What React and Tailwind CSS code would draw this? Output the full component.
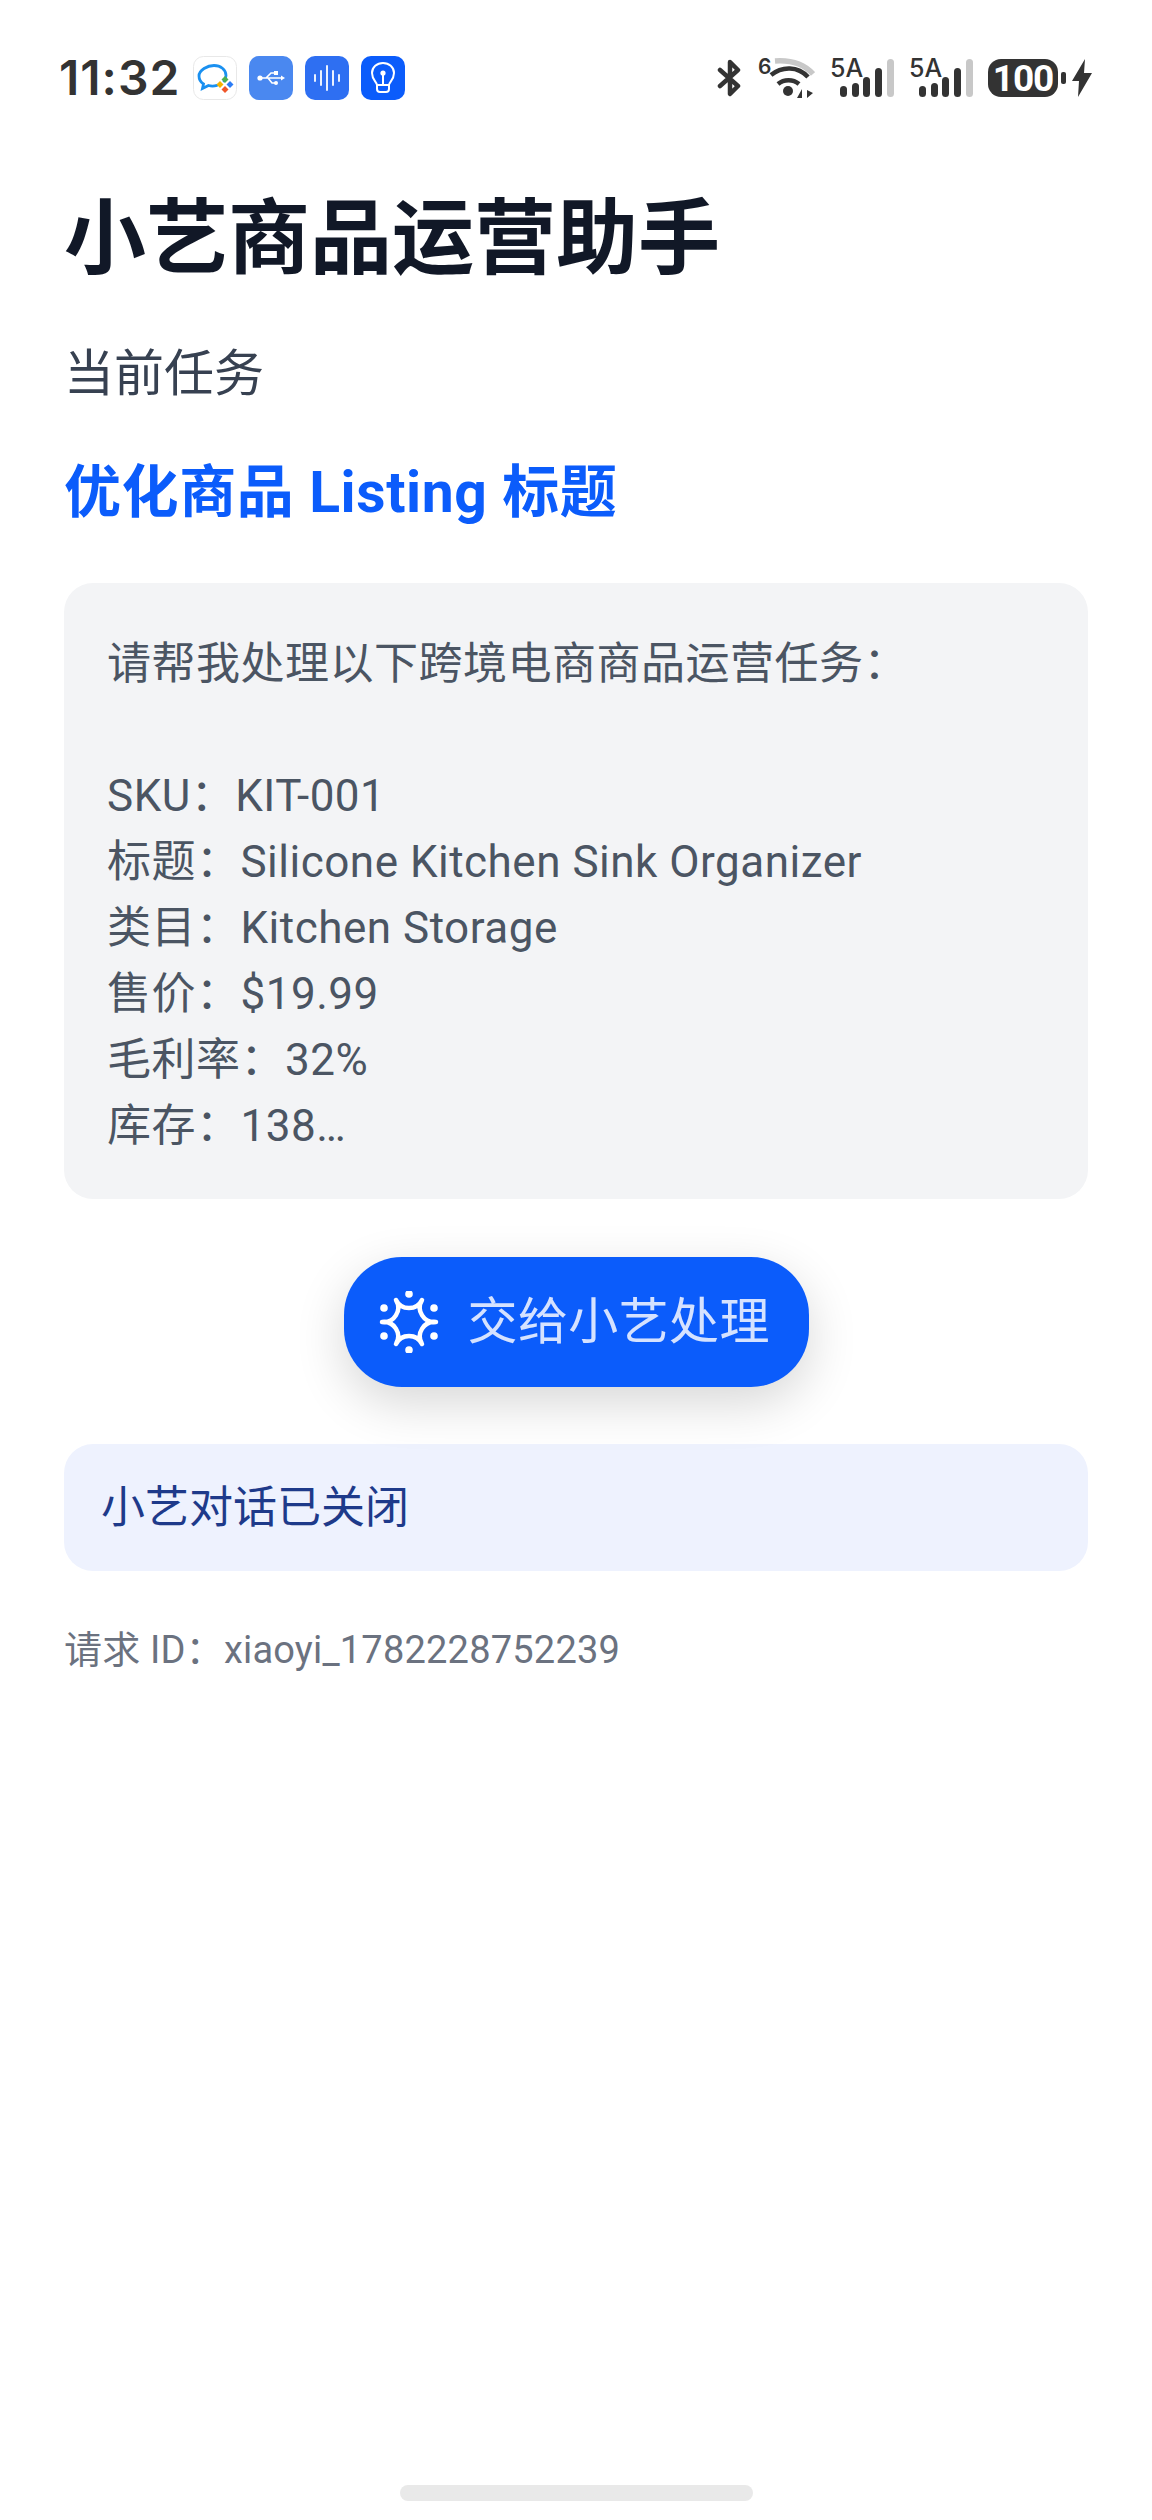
import React from 'react';

const FONT = "font-['Roboto','Noto_Sans_CJK_SC',sans-serif]";

const taskLines = [
  '请帮我处理以下跨境电商商品运营任务：',
  '',
  'SKU：KIT-001',
  '标题：Silicone Kitchen Sink Organizer',
  '类目：Kitchen Storage',
  '售价：$19.99',
  '毛利率：32%',
  '库存：138…',
];

// ── Status bar app icons ──
function ChatIcon() {
  return (
    <svg width="44" height="44" viewBox="0 0 44 44" fill="none">
      <rect x="0.5" y="0.5" width="43" height="43" rx="10" fill="#fff" stroke="#e8e8e8" />
      <path d="M31 25c1.500-1.500 2-3.500 2-5.500 0-6-5.500-10-12-10S6 14 6 20c0 3.500 1.500 6 4.500 8l-1 4.500 6-3c3 .8 6 .6 8.500-.2" stroke="#1a90f0" strokeWidth="2.800" strokeLinecap="round" />
      <path d="M32 20l3.500 3.500-3.500 3.500-3.500-3.500z" fill="#4caf50" />
      <path d="M27 25l3.500 3.500-3.500 3.500-3.500-3.500z" fill="#f5b400" />
      <path d="M37 25l3.500 3.500-3.500 3.500-3.500-3.500z" fill="#2b7cf6" />
      <path d="M32 30l3.500 3.500-3.500 3.500-3.500-3.500z" fill="#f0562a" />
    </svg>
  );
}

function UsbIcon() {
  return (
    <svg width="44" height="44" viewBox="0 0 44 44" fill="none">
      <rect width="44" height="44" rx="10" fill="#4a88f0" />
      <path d="M10 22h24M17 22l5-5h4M19 22l4 5h3" stroke="#fff" strokeWidth="1.600" />
      <circle cx="11" cy="22" r="2.600" fill="#fff" />
      <rect x="25" y="15" width="4" height="4" fill="#fff" />
      <circle cx="27" cy="27" r="2" fill="#fff" />
      <path d="M32 19.500l4 2.500-4 2.500z" fill="#fff" />
    </svg>
  );
}

function VoiceIcon() {
  return (
    <svg width="44" height="44" viewBox="0 0 44 44" fill="none">
      <rect width="44" height="44" rx="10" fill="#2e6ff2" />
      <path d="M10 19v6M16 15v14M22 10v24M28 15v14M34 19v6" stroke="#fff" strokeWidth="2" strokeLinecap="round" opacity="0.9" />
    </svg>
  );
}

function BulbIcon() {
  return (
    <svg width="44" height="44" viewBox="0 0 44 44" fill="none">
      <rect width="44" height="44" rx="10" fill="#0b5cfb" />
      <path d="M16 29c0-3-5-5-5-12 0-6 5-10 11-10s11 4 11 10c0 7-5 9-5 12z" stroke="#fff" strokeWidth="2" strokeLinejoin="round" />
      <path d="M16 29v4a3 3 0 0 0 3 3h6a3 3 0 0 0 3-3v-4M22 29V18" stroke="#fff" strokeWidth="2" />
      <circle cx="22" cy="17" r="2.600" fill="#fff" />
    </svg>
  );
}

// ── Status bar system icons ──
function BluetoothIcon() {
  return (
    <svg width="26" height="38" viewBox="0 0 26 38" fill="none">
      <path d="M3 11l18 16-8 8V3l8 8L3 27" stroke="#333" strokeWidth="4.500" strokeLinejoin="round" strokeLinecap="round" />
    </svg>
  );
}

function WifiIcon() {
  return (
    <svg className="-mt-2" width="57" height="48" viewBox="0 -8 57 48" fill="none">
      <text x="0" y="16" fontSize="21" fontWeight="600" fill="#333" fontFamily="Inter, sans-serif">6</text>
      <path d="M17 3c14-1 28 2 38 13" stroke="#c8c8c8" strokeWidth="5.500" />
      <path d="M13 17c11-9 27-9 37 2" stroke="#333" strokeWidth="4.500" />
      <path d="M20 26c6-5 15-5 21 0" stroke="#333" strokeWidth="4.500" />
      <circle cx="30" cy="33" r="5" fill="#333" />
      <path d="M44 40v-9l-5 9zM49 32v8l6-5z" fill="#333" />
    </svg>
  );
}

function SignalIcon() {
  return (
    <svg className="-mt-2" width="64" height="46" viewBox="0 -8 64 46" fill="none">
      <text x="0" y="18" fontSize="25" fontWeight="500" fill="#333" fontFamily="Inter, sans-serif">5A</text>
      <rect x="10" y="27" width="7" height="11" rx="3.500" fill="#333" />
      <rect x="22" y="24" width="7" height="14" rx="3.500" fill="#333" />
      <rect x="33" y="18" width="7" height="20" rx="3.500" fill="#333" />
      <rect x="45" y="9" width="7" height="29" rx="3.500" fill="#333" />
      <rect x="57" y="0" width="7" height="38" rx="3.500" fill="#c8c8c8" />
    </svg>
  );
}

function BatteryIcon() {
  return (
    <div className="flex items-center">
      <div className="w-[70px] h-[38px] rounded-[13px] bg-[#333] flex items-center justify-center text-white text-[37px] font-bold leading-none tracking-[-1px]">100</div>
      <div className="ml-[3px] w-[5px] h-[12px] rounded-[2px] bg-[#333]" />
      <svg className="ml-[6px]" width="20" height="38" viewBox="0 0 20 38">
        <path d="M13 0L0 22h7l-1 16L20 14h-8z" fill="#333" />
      </svg>
    </div>
  );
}

function StatusBar() {
  return (
    <div className="flex items-center justify-between pl-[59px] pr-[60px] h-[156px]">
      <div className="flex items-center">
        <span className="font-['Inter'] text-[48px] font-semibold leading-none text-[#333] tracking-[1px] mr-[13px]">11:32</span>
        <div className="flex items-center gap-3">
          <ChatIcon />
          <UsbIcon />
          <VoiceIcon />
          <BulbIcon />
        </div>
      </div>
      <div className="flex items-center gap-[15px]">
        <BluetoothIcon />
        <WifiIcon />
        <SignalIcon />
        <SignalIcon />
        <BatteryIcon />
      </div>
    </div>
  );
}

function SparkIcon() {
  return (
    <svg width="62" height="62" viewBox="-31 -31 62 62" fill="none">
      <path
        d="M-13-22A14.500 14.500 0 0 0 13-22A14.500 14.500 0 0 0 27 0A14.500 14.500 0 0 0 13 22A14.500 14.500 0 0 0-13 22A14.500 14.500 0 0 0-27 0A14.500 14.500 0 0 0-13-22Z"
        stroke="#fff"
        strokeWidth="4.500"
        strokeLinejoin="round"
      />
      <circle cx="0" cy="-28" r="3.800" fill="#fff" />
      <circle cx="0" cy="28" r="3.800" fill="#fff" />
      <circle cx="-25" cy="-14" r="3.800" fill="#fff" />
      <circle cx="25" cy="-14" r="3.800" fill="#fff" />
      <circle cx="-25" cy="14" r="3.800" fill="#fff" />
      <circle cx="25" cy="14" r="3.800" fill="#fff" />
    </svg>
  );
}

export default function App() {
  return (
    <div className={`${FONT} h-[2520px] w-[1152px] bg-white flex flex-col`}>
      <StatusBar />

      <div className="px-16 flex-1">
        <h1 className="text-[82px] font-bold leading-none text-[#111827] mt-[42px]">小艺商品运营助手</h1>
        <p className="text-[50px] leading-none text-[#374151] mt-[69px]">当前任务</p>
        <p className="text-[57px] font-bold leading-none tracking-[0.6px] text-[#0b5cfb] mt-[65px]">优化商品 Listing 标题</p>

        <div className="mt-[62px] rounded-[29px] bg-[#f3f4f6] px-[43px] pt-[48px] pb-[40px] text-[44px] leading-[66px] tracking-[0.5px] text-[#4b5563]">
          {taskLines.map((line, i) => (
            <div key={i} className="h-[66px]">{line}</div>
          ))}
        </div>

        <div className="flex justify-center mt-[58px]">
          <button
            type="button"
            className="w-[465px] h-[130px] rounded-[58px] bg-[#0b5cfb] flex items-center pl-[34px] shadow-[0_16px_50px_rgba(0,0,0,0.16)]"
          >
            <SparkIcon />
            <span className="ml-[28px] text-[50px] leading-none tracking-[0.4px] text-[#d5e2ff]">交给小艺处理</span>
          </button>
        </div>

        <div className="mt-[57px] h-[127px] rounded-[29px] bg-[#eef2fe] px-[37px] flex items-center text-[44px] text-[#1e3a8a]">
          小艺对话已关闭
        </div>

        <p className="mt-[60px] text-[38px] leading-none tracking-[0.2px] text-[#6b7280]">请求 ID：xiaoyi_1782228752239</p>
      </div>

      <div className="flex justify-center pb-[19px]">
        <div className="w-[353px] h-[16px] rounded-full bg-[#e9e9e9]" />
      </div>
    </div>
  );
}
